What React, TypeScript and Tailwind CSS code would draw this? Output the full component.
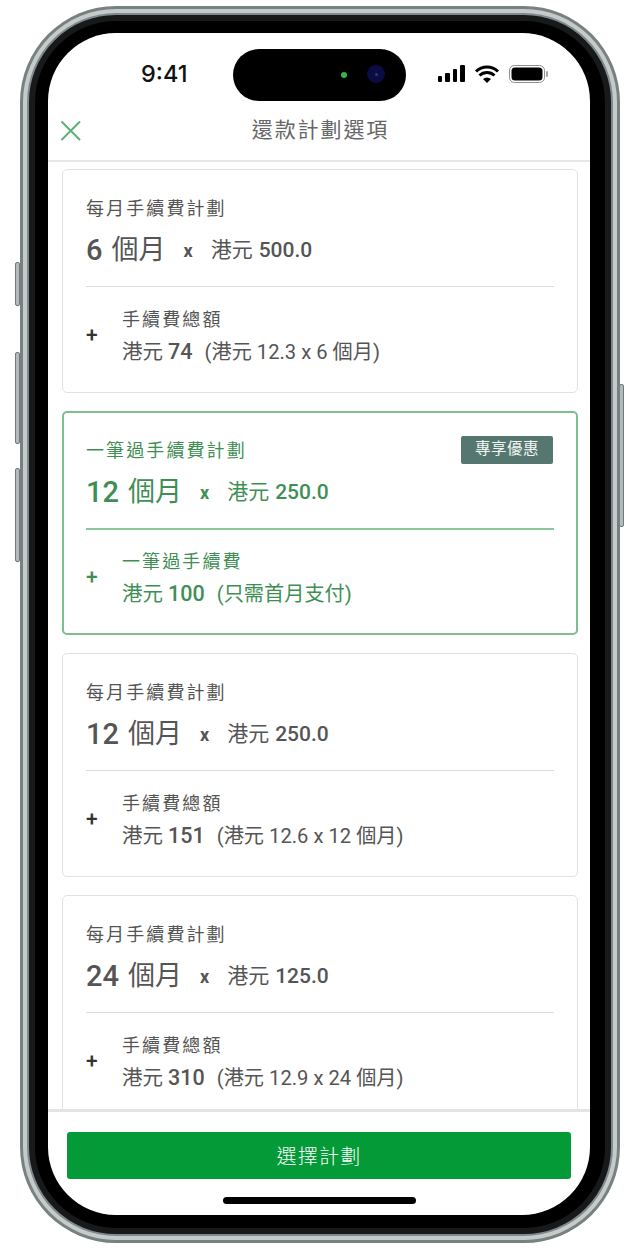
const sideButton =
  "absolute w-[5px] rounded-[2px] bg-[#b4babb] border border-[#6f797b]";

interface PlanCardProps {
  title: string;
  months: string;
  amount: string;
  feeLabel: string;
  fee: string;
  feeNote: string;
  highlighted?: boolean;
}

function PlanCard({ title, months, amount, feeLabel, fee, feeNote, highlighted }: PlanCardProps) {
  const [count, unit] = months.split(" ");
  const [currency, value] = amount.split(" ");
  const [feeCurrency, feeValue] = fee.split(" ");

  return (
    <div
      className={`relative shrink-0 h-[224px] rounded-[5px] bg-white ${
        highlighted
          ? "border-2 border-[#7fbe8f] px-[22px] pt-[25px] text-[#3f8f55]"
          : "border border-[#e2e2e2] px-[23px] pt-[26px] text-[#555555]"
      }`}
    >
      {highlighted && (
        <div className="absolute right-[23px] top-[23px] flex h-[28px] w-[92px] items-center justify-center rounded-[2px] bg-[#55776f] text-[15.5px] tracking-[0.5px] text-[#f1f5f3]">
          專享優惠
        </div>
      )}
      <div className="h-[26px] text-[18px] leading-[26px] tracking-[2.1px]">{title}</div>
      <div className="mt-[9px] flex h-[38px] items-center">
        <span className="text-[29px] font-medium leading-[38px]">{count}</span>
        <span className="ml-[9px] text-[27px] leading-[38px]">{unit}</span>
        <span className="ml-[18px] text-[18px] font-bold">x</span>
        <span className="ml-[18px] pt-[2px] text-[21px]">{currency}</span>
        <span className="ml-[6px] pt-[2px] text-[21px] font-medium">{value}</span>
      </div>
      <div className={`mt-[17px] ${highlighted ? "h-[2px] bg-[#8cc79a]" : "h-px bg-[#dcdcdc]"}`} />
      <div className={`flex items-center ${highlighted ? "mt-[15px]" : "mt-[16px]"}`}>
        <span
          className={`-mt-[2px] w-[36px] text-[21px] font-medium leading-none ${
            highlighted ? "text-[#3f8f55]" : "text-[#333333]"
          }`}
        >
          +
        </span>
        <div>
          <div className="h-[33px] text-[18px] leading-[33px] tracking-[2.1px]">{feeLabel}</div>
          <div className="flex h-[33px] items-center whitespace-pre">
            <span className="text-[20.5px]">{feeCurrency} </span>
            <span className="text-[21.5px] font-medium">{feeValue}</span>
            <span className="ml-[12px] text-[20.2px]">{feeNote}</span>
          </div>
        </div>
      </div>
    </div>
  );
}

export default function App() {
  return (
    <div
      className="relative h-[1250px] w-[640px] overflow-hidden bg-white pl-[20px] pt-[6px]"
      style={{ fontFamily: 'Roboto, "Noto Sans CJK TC", sans-serif' }}
    >
      <div className={`${sideButton} left-[15px] top-[262px] h-[44px]`} />
      <div className={`${sideButton} left-[15px] top-[352px] h-[92px]`} />
      <div className={`${sideButton} left-[15px] top-[468px] h-[94px]`} />
      <div className={`${sideButton} left-[619px] top-[384px] h-[143px]`} />

      {/* phone body */}
      <div className="relative h-[1237px] w-[600px] rounded-[96px] bg-[#77817f] p-[3px]">
        <div className="h-full w-full rounded-[93px] bg-[#c6cacb] p-[4px]">
          <div className="h-full w-full rounded-[89px] bg-[#7f8a8b] p-[2px]">
            <div className="h-full w-full rounded-[87px] border-[6px] border-[#17191a] bg-black pb-[13px] pl-[13px] pr-[15px] pt-[12px]">
              <div className="relative flex h-full w-full flex-col overflow-hidden rounded-[68px] bg-white">
                {/* status bar */}
                <div className="relative flex h-[79px] shrink-0 items-start">
                  <span
                    className="absolute left-[93px] top-[24px] text-[23.5px] font-medium leading-[34px] text-[#111111]"
                    style={{ fontFamily: "Inter, sans-serif" }}
                  >
                    9:41
                  </span>
                  <div className="absolute left-[185px] top-[16px] h-[52px] w-[173px] rounded-full bg-black">
                    <span className="absolute left-[108px] top-[23px] h-[6px] w-[6px] rounded-full bg-[#35b34f]" />
                    <span className="absolute left-[134px] top-[16px] flex h-[18px] w-[18px] items-center justify-center rounded-full bg-[#0b0b45]">
                      <span className="h-[3px] w-[3px] rounded-full bg-[#3a3a55]" />
                    </span>
                  </div>
                  <svg
                    className="absolute left-[390px] top-[32px]"
                    width="110"
                    height="20"
                    viewBox="0 0 110 20"
                  >
                    <rect x="0" y="11" width="4" height="6" rx="1" fill="#000" />
                    <rect x="7" y="8" width="5" height="9" rx="1" fill="#000" />
                    <rect x="15" y="4" width="4" height="13" rx="1" fill="#000" />
                    <rect x="22" y="0" width="5" height="17" rx="1" fill="#000" />
                    <path
                      d="M38 6.5a16 16 0 0 1 22 0M41.5 10.5a11 11 0 0 1 15 0"
                      fill="none"
                      stroke="#000"
                      strokeWidth="3"
                    />
                    <path d="M45 14a6 6 0 0 1 8 0L49 18z" fill="#000" />
                    <rect x="71.5" y="0.5" width="35" height="17" rx="5" fill="none" stroke="#8d8d8d" />
                    <rect x="73.5" y="2.5" width="31" height="13" rx="3.5" fill="#000" />
                    <rect x="108" y="6" width="2" height="6" rx="1" fill="#a5a5a5" />
                  </svg>
                </div>

                {/* nav bar */}
                <div className="relative flex h-[50px] shrink-0 items-center justify-center border-b-2 border-[#e6e6e6] pb-[18px] pl-[3px] pt-[6px]">
                  <svg
                    className="absolute left-[12px] top-[8px]"
                    width="22"
                    height="22"
                    viewBox="0 0 22 22"
                    fill="none"
                    stroke="#5cb078"
                    strokeWidth="2"
                  >
                    <path d="M1.5 1.5 20 20M20 1.5 1.5 20" />
                  </svg>
                  <h1 className="text-[21px] font-normal leading-[30px] tracking-[1.9px] text-[#666666]">
                    還款計劃選項
                  </h1>
                </div>

                {/* plan list */}
                <div className="flex min-h-0 flex-1 flex-col gap-[18px] overflow-hidden pl-[14px] pr-[12px] pt-[7px]">
                  <PlanCard
                    title="每月手續費計劃"
                    months="6 個月"
                    amount="港元 500.0"
                    feeLabel="手續費總額"
                    fee="港元 74"
                    feeNote="(港元 12.3 x 6 個月)"
                  />
                  <PlanCard
                    highlighted
                    title="一筆過手續費計劃"
                    months="12 個月"
                    amount="港元 250.0"
                    feeLabel="一筆過手續費"
                    fee="港元 100"
                    feeNote="(只需首月支付)"
                  />
                  <PlanCard
                    title="每月手續費計劃"
                    months="12 個月"
                    amount="港元 250.0"
                    feeLabel="手續費總額"
                    fee="港元 151"
                    feeNote="(港元 12.6 x 12 個月)"
                  />
                  <PlanCard
                    title="每月手續費計劃"
                    months="24 個月"
                    amount="港元 125.0"
                    feeLabel="手續費總額"
                    fee="港元 310"
                    feeNote="(港元 12.9 x 24 個月)"
                  />
                </div>

                {/* footer */}
                <div className="flex h-[106px] shrink-0 flex-col items-center border-t-[3px] border-[#e4e4e4] pt-[20px]">
                  <button className="h-[47px] w-[504px] rounded-[3px] bg-[#049a38] pt-[2px] text-[20px] font-light tracking-[1.2px] text-white">
                    選擇計劃
                  </button>
                  <div className="mt-[18px] h-[7px] w-[193px] rounded-full bg-black" />
                </div>
              </div>
            </div>
          </div>
        </div>
      </div>
    </div>
  );
}
